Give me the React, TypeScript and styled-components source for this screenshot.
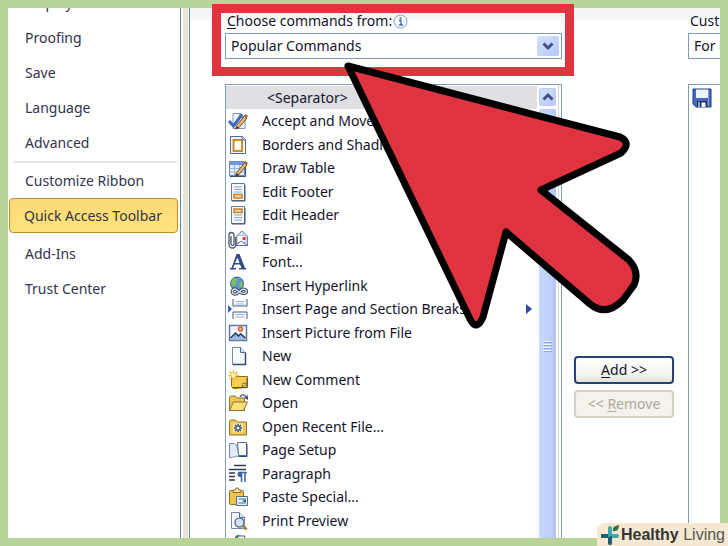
import React from 'react';
import styled, { createGlobalStyle } from 'styled-components';

const GlobalStyle = createGlobalStyle`
  *, *::before, *::after { box-sizing: border-box; }
  body {
    margin: 0;
    background: #b9d398;
    color: #14142c;
    font: 14px/20px "Noto Sans", "Open Sans", sans-serif;
  }
  button, select { font: inherit; color: inherit; }
  ul { list-style: none; margin: 0; padding: 0; }
`;

const Page = styled.div`
  position: relative;
  display: grid;
  grid-template-columns: 182px minmax(0, 1fr);
  height: 100vh;
  padding: 8px;
  overflow: hidden;
`;

const Sidebar = styled.nav`
  overflow: hidden;
  padding-right: 9px;
  background: linear-gradient(
    to left,
    #5c8cac 1px, #fff 1px, #fff 2px, #ebe6d4 2px, #ebe6d4 7px,
    #fff 7px, #fff 9px, #5c8cac 9px, #5c8cac 10px, #fff 10px
  );
`;

const NavList = styled.ul`
  margin-top: -23px;
  padding-left: 1px;
`;

const NavItem = styled.li<{ $after?: 'line' | 'gap' }>`
  padding-right: 3px;
  ${(p) => p.$after === 'line' && `
    &::after { content: ''; display: block; height: 2px; margin: 1px 1px 0 4px; background: #e4e4e6; }
  `}
  ${(p) => p.$after === 'gap' && 'margin-bottom: 3px;'}
`;

const NavButton = styled.button<{ $active?: boolean }>`
  display: block;
  width: 100%;
  height: 35px;
  padding: 0 0 0 ${(p) => (p.$active ? 14 : 15)}px;
  text-align: left;
  white-space: nowrap;
  color: #33334d;
  background: ${(p) => (p.$active ? 'linear-gradient(#fbd878, #fddf76 50%, #fee57c)' : 'transparent')};
  border: ${(p) => (p.$active ? '1px solid #bd8a2c' : '1px solid transparent')};
  border-radius: 4px;
`;

const Main = styled.main`
  display: grid;
  grid-template-columns: minmax(0, 337fr) 126px minmax(0, 32fr);
  min-height: 0;
  padding-left: 35px;
  background: linear-gradient(#f4f4f5, #f6f6f7 11px, #fff 13px);
`;

const Column = styled.section`
  display: flex;
  flex-direction: column;
  min-width: 0;
  min-height: 0;
`;

const ClippedColumn = styled(Column)`
  overflow: hidden;
  & > * { min-width: 337px; }
`;

const Field = styled.div`
  position: relative;
  height: 76px;
  padding-top: 3px;
`;

const Label = styled.label`
  display: flex;
  align-items: center;
  gap: 1px;
  height: 20px;
  padding-left: 2px;
  white-space: nowrap;
`;

const Key = styled.span`
  text-decoration: underline;
  text-underline-offset: 2px;
`;

const SelectBox = styled.div`
  display: grid;
  align-items: center;
  margin-top: 2px;
  & > * { grid-area: 1 / 1; }
`;

const Select = styled.select`
  appearance: none;
  width: 100%;
  height: 26px;
  padding: 0 0 0 5px;
  background: #fff;
  border: 1px solid #7f9db9;
  border-radius: 0;
`;

const SelectArrow = styled.span`
  display: grid;
  place-items: center;
  justify-self: end;
  width: 22px;
  height: 20px;
  margin-right: 3px;
  background: linear-gradient(135deg, #d5e1fe, #b4c8f8);
  border-radius: 2px;
  pointer-events: none;
`;

const Highlight = styled.div`
  position: absolute;
  inset: -4px -12px 8px -13px;
  border: 9px solid #e0343f;
  pointer-events: none;
`;

const ListPanel = styled.div`
  display: grid;
  grid-template-columns: minmax(0, 1fr) 24px;
  flex: 1;
  min-height: 0;
  overflow: hidden;
  background: #fff;
  border: 1px solid #7f9db9;
  border-bottom: 0;
`;

const Commands = styled.ul`
  padding-top: 1px;
  min-height: 0;
`;

const Command = styled.li`
  display: grid;
  grid-template-columns: 20px minmax(0, 1fr) auto;
  align-items: center;
  column-gap: 14px;
  height: 23px;
  padding: 0 5px 0 2px;
  white-space: nowrap;
  &:nth-child(even) { height: 24px; }
`;

const Separator = styled(Command)`
  grid-template-columns: minmax(0, 1fr);
  padding-left: 41px;
  background: #e0dfe3;
`;

const ScrollBar = styled.div`
  display: flex;
  flex-direction: column;
  gap: 3px;
  min-height: 0;
  padding: 3px 2px 0;
  border-right: 1px solid #c9d9e8;
  margin-right: 2px;
  background: #fdfdfb;
`;

const ScrollButton = styled.button`
  display: grid;
  place-items: center;
  flex: none;
  height: 18px;
  padding: 0;
  background: linear-gradient(135deg, #d5e1fe, #b4c8f8);
  border: 1px solid #b9cbf3;
  border-radius: 2px;
`;

const Thumb = styled.div`
  display: grid;
  flex: none;
  place-items: center;
  height: 474px;
  background: linear-gradient(to right, #c9d8fd, #bccffb 70%, #b3c5f3);
  border-radius: 2px;
`;

const Actions = styled.div`
  display: flex;
  flex-direction: column;
  align-items: center;
  gap: 6px;
  padding: 348px 2px 0 0;
`;

const ActionButton = styled.button`
  width: 100px;
  height: 28px;
  padding: 0;
  background: linear-gradient(#fff, #f4f3ee 70%, #e4e1d6);
  border: 2px solid #24427c;
  border-radius: 4px;
  white-space: nowrap;
  &:disabled {
    color: #aaa99c;
    background: #f4f2e9;
    border-color: #d6d1c2;
  }
`;

const SaveItem = styled.li`
  padding: 3px;
  line-height: 0;
`;

const CursorArt = styled.svg`
  position: absolute;
  left: 340px;
  top: 56px;
  pointer-events: none;
`;

const Brand = styled.footer`
  position: absolute;
  right: 0;
  bottom: 0;
  display: flex;
  align-items: center;
  gap: 2px;
  height: 23px;
  padding: 0 3px 0 4px;
  background: #f6e8d0;
  border-radius: 8px 0 0 0;
  color: #555;
  font: 16px/22px "Liberation Sans", Arial, sans-serif;
  white-space: nowrap;
  strong { color: #343434; }
`;

const Chevron = ({ up }: { up?: boolean }) => (
  <svg width="12" height="10" viewBox="0 0 12 10" fill="none" stroke="#40537c" strokeWidth="3" aria-hidden="true">
    <path d={up ? 'M1.5 7.5 6 3l4.5 4.5' : 'M1.5 2.5 6 7l4.5-4.5'} />
  </svg>
);

const InfoIcon = () => (
  <svg width="15" height="15" viewBox="0 0 15 15" aria-hidden="true">
    <circle cx="7.5" cy="7.5" r="6.5" fill="#f8faff" stroke="#8ba3cd" />
    <path d="M6 6.5h2V11M6 11h4" fill="none" stroke="#4169b5" strokeWidth="1.3" />
    <rect x="6.7" y="3.4" width="1.8" height="1.8" fill="#4169b5" />
  </svg>
);

const SaveIcon = () => (
  <svg width="20" height="20" viewBox="0 0 20 20" aria-hidden="true">
    <path d="M1 1h18v18H4l-3-3z" fill="#4668bd" stroke="#203c86" />
    <path d="M4 1.5h12V10H4z" fill="#edf3ff" />
    <path d="M16.5 2v16" stroke="#7f9ce0" />
    <path d="M5 13h10v6H5z" fill="#26314f" />
    <path d="M9.5 14.5h4V19h-4z" fill="#fff" />
    <path d="M6 14h2v5H6z" fill="#8fa8d8" />
  </svg>
);

const Folder = ({ open }: { open?: boolean }) => (
  <>
    <path d="M1.5 17.5v-13l1-1.5h5l2 2h7v12.5z" fill="#efc64e" stroke="#8d7530" />
    {open && <path d="M1.5 17.5 5.5 9h14l-4 8.5z" fill="#fbdf7d" stroke="#8d7530" />}
  </>
);

const Pencil = () => (
  <>
    <path d="m8.5 14.5 8-9.5 2.5 2-8 9.5-3.5 1.5z" fill="#e9b568" stroke="#65503a" />
    <path d="m16 5 1.5-2 2.5 2-1.5 2z" fill="#b85c3b" />
    <path d="m8 18 .8-2.8L11 17z" fill="#20242e" />
  </>
);

const drawings: Record<string, React.ReactNode> = {
  accept: (
    <>
      <path d="M5 2.5h8l4 4v11H5z" fill="#eef4fd" stroke="#8296b4" />
      <path d="m1 10 4.5 5L14 3.5" fill="none" stroke="#3c68bd" strokeWidth="3" />
      <path d="M12 2.5v4h4" fill="none" stroke="#5a6e8c" />
      <Pencil />
    </>
  ),
  borders: (
    <>
      <path d="M2.5 1.5h12l3 3v14h-15z" fill="#f6f8fc" stroke="#52698f" />
      <path d="M5.5 5H14v11H5.5z" fill="#fffdf5" stroke="#cd8b30" strokeWidth="2" />
      <path d="M14 1.5V5h3.5" fill="#dce6f5" stroke="#52698f" />
    </>
  ),
  table: (
    <>
      <path d="M1.5 3.5h15v14h-15z" fill="#e7effc" stroke="#6684b9" />
      <path d="M1.5 3.5h15V7h-15z" fill="#7197dd" />
      <path d="M1.5 10.5h15m-15 3.5h15M6.5 7v10.5m5-10.5v10.5" stroke="#9bb3dc" />
      <path d="M2 18.5h15.5V8" fill="none" stroke="#334d7d" />
      <Pencil />
    </>
  ),
  footer: (
    <>
      <path d="M3.5 1.5h13v17h-13z" fill="#f7faff" stroke="#65799c" />
      <path d="M6 5h8M6 7.5h8M6 10h8" stroke="#8ca3c7" />
      <path d="M6 12.5h8V16H6z" fill="#fbd89a" stroke="#c5842c" strokeWidth="1.5" />
      <path d="M4 19h13V3" fill="none" stroke="#415675" />
    </>
  ),
  header: (
    <>
      <path d="M3.5 1.5h13v17h-13z" fill="#f7faff" stroke="#65799c" />
      <path d="M6 4h8v3.5H6z" fill="#fbd89a" stroke="#c5842c" strokeWidth="1.5" />
      <path d="M6 10h8M6 12.5h8M6 15h8" stroke="#8ca3c7" />
      <path d="M4 19h13V3" fill="none" stroke="#415675" />
    </>
  ),
  mail: (
    <>
      <path d="M7.5 8 14 2l5.5 5v9.5h-12z" fill="#dce6f5" stroke="#7085a8" />
      <path d="M9 6.5h9v7H9z" fill="#fff" stroke="#a9b8d0" />
      <path d="M7.5 16.5 13 12l6.5 4.500z" fill="#f4f7fc" stroke="#5c7196" />
      <path d="M14.5 8h3v3h-3z" fill="#d54538" />
      <path d="M3 7v8a1.5 1.5 0 0 0 3 0V6a2.5 2.5 0 0 0-5 0v9.5a3.500 3.500 0 0 0 7 0V8" fill="none" stroke="#4b556b" strokeWidth="1.3" />
    </>
  ),
  font: (
    <path d="M8.5 2h3L17 16h1v1.5h-7V16h2.5L12 12.5H6.5L5.3 16H8v1.5H2V16h1.5zM9.500 5.500 7 11h4.500z" fill="#304b85" fillRule="evenodd" />
  ),
  link: (
    <>
      <circle cx="9" cy="7.5" r="6.5" fill="#5b91d7" stroke="#315c9d" />
      <path d="M4 4c3-3 6-2 6 0L8 6l1 2-3 3-2-2-1.5-2zM11 7l3-2 1 3-2 4-2-2zM10 1.5l3 1-1 1z" fill="#7bbd64" />
      <path d="M4.5 14.5c1-2 3-2 5 0l3 2c3 1.500 6 1 6-1s-3-3-5-1.500l-3 2.500c-3 2.500-7 2-6-2z" fill="none" stroke="#3f4f68" strokeWidth="3.4" />
      <path d="M4.5 14.5c1-2 3-2 5 0l3 2c3 1.500 6 1 6-1s-3-3-5-1.500l-3 2.500c-3 2.500-7 2-6-2z" fill="none" stroke="#dce4ee" strokeWidth="1.3" />
    </>
  ),
  break: (
    <>
      <path d="M5 0v7h14V0M5 20v-7h14v7" fill="#f7faff" stroke="#42587c" />
      <path d="M7.5 2.5h9M7.5 5h9M7.5 15.500h9M7.5 18h9" stroke="#9dafca" />
      <path d="m0 6 4 4-4 4z" fill="#315dba" />
    </>
  ),
  picture: (
    <>
      <path d="M1.5 2.5h17v15h-17z" fill="#f1f6ff" stroke="#6278a0" strokeWidth="1.5" />
      <path d="m2.5 15 5-5 3 2.500 2.500-3 4.500 5V17h-15z" fill="#9db8e2" />
      <path d="m2.500 15 5-5 3 3 2-2 5 4" fill="none" stroke="#233d6b" strokeWidth="1.5" />
      <circle cx="12.5" cy="6" r="2" fill="#f7d176" stroke="#d65d36" strokeWidth="1.5" />
    </>
  ),
  blank: (
    <>
      <path d="M4.5 1.5h8l5 5v12h-13z" fill="#f7faff" stroke="#7187ad" />
      <path d="M12.5 1.5v5h5" fill="#d6e3f7" stroke="#536b95" />
      <path d="M5 18.5h12.5V7" fill="none" stroke="#354c79" strokeWidth="1.5" />
    </>
  ),
  comment: (
    <>
      <path d="M3.5 6.5h16v11l-14 1-2-2z" fill="#f5ce51" stroke="#8b6f27" />
      <path d="M4 17.5h15V8" fill="none" stroke="#604d25" />
      <path d="m14 17 1-4 4 1z" fill="#fff0a6" stroke="#8b6f27" />
      <path d="M5.5 0v11M0 5.5h11M1.5 1.5l8 8m0-8-8 8" stroke="#edbd3c" strokeWidth="1.5" />
      <circle cx="5.5" cy="5.5" r="2" fill="#fff7cd" />
    </>
  ),
  open: (
    <>
      <Folder open />
      <path d="M12 4c2-3 4-3 6 0" fill="none" stroke="#58719f" strokeWidth="1.5" />
      <path d="M20 2v5l-4-2z" fill="#405989" />
    </>
  ),
  recent: (
    <>
      <path d="M1.5 18V4.500L2.500 3h5l2 2h9v13z" fill="#efc64e" stroke="#8d7530" />
      <path d="M5 6.500h10v9H5z" fill="#fbe9a8" />
      <path d="M10 7v8M6 11h8M7 8l6 6m0-6-6 6" stroke="#29477d" strokeWidth="1.5" />
      <circle cx="10" cy="11" r="1.5" fill="#fff" />
    </>
  ),
  setup: (
    <>
      <path d="M1.5 17.5v-14h5c2 0 3 5 4.500 10v3.500c-3-2-6 1-9.500.5z" fill="#e3eaf7" stroke="#7385a4" />
      <path d="M9.5 2.5h9v13h-8z" fill="#f8faff" stroke="#526b97" />
      <path d="M11 16.5h8V4" fill="none" stroke="#304774" />
    </>
  ),
  paragraph: (
    <>
      <path d="M6 1.5h12M1 5.5h17M1 9h6M1 12.5h6M1 16h6" stroke="#34394b" strokeWidth="1.5" />
      <path d="M17 8v10M13.5 8v10M10 8.5h9" stroke="#4062a0" strokeWidth="1.5" />
      <path d="M13.5 8H12a2.5 2.5 0 0 0 0 5h1.5z" fill="#4062a0" />
    </>
  ),
  paste: (
    <>
      <rect x="1.5" y="3.5" width="14" height="14" rx="1" fill="#efc44d" stroke="#8d702c" />
      <path d="M5 5.5V3h2l1-2h2l1 2h2v2.5z" fill="#f5e3a0" stroke="#846d3b" />
      <path d="M8.5 9.5h11v9h-11z" fill="#e8f2fd" stroke="#506c86" />
      <path d="M10.5 12h7M10.5 16h7" stroke="#6ba2a4" strokeWidth="1.5" />
      <path d="m14 14 4-2v4z" fill="#466594" />
    </>
  ),
  preview: (
    <>
      <path d="M3.5 1.5h8l5 5v11h-13z" fill="#f6f9ff" stroke="#7489ae" />
      <path d="M11.5 1.5v5h5" fill="#dce6f5" stroke="#536b95" />
      <path d="m15 15 3.5 3.5" stroke="#b28031" strokeWidth="3" />
      <circle cx="11.5" cy="11.5" r="4.5" fill="#d0e2f7" stroke="#66758c" strokeWidth="1.5" />
    </>
  ),
  print: (
    <>
      <path d="M6 8 8 2h9l-2 6z" fill="#fff" stroke="#55657d" />
      <path d="M2 8h16v7H2z" fill="#dde1e5" stroke="#4d5662" />
      <path d="m2 5 3 3 6-7" fill="none" stroke="#4e8750" strokeWidth="2" />
    </>
  ),
};

const commands: { icon: string; name: string; submenu?: boolean }[] = [
  { icon: 'accept', name: 'Accept and Move to Next' },
  { icon: 'borders', name: 'Borders and Shading...' },
  { icon: 'table', name: 'Draw Table' },
  { icon: 'footer', name: 'Edit Footer' },
  { icon: 'header', name: 'Edit Header' },
  { icon: 'mail', name: 'E-mail' },
  { icon: 'font', name: 'Font...' },
  { icon: 'link', name: 'Insert Hyperlink' },
  { icon: 'break', name: 'Insert Page and Section Breaks', submenu: true },
  { icon: 'picture', name: 'Insert Picture from File' },
  { icon: 'blank', name: 'New' },
  { icon: 'comment', name: 'New Comment' },
  { icon: 'open', name: 'Open' },
  { icon: 'recent', name: 'Open Recent File...' },
  { icon: 'setup', name: 'Page Setup' },
  { icon: 'paragraph', name: 'Paragraph' },
  { icon: 'paste', name: 'Paste Special...' },
  { icon: 'preview', name: 'Print Preview' },
  { icon: 'print', name: 'Quick Print' },
];

const sections: { name: string; active?: boolean; after?: 'line' | 'gap' }[] = [
  { name: 'Display' },
  { name: 'Proofing' },
  { name: 'Save' },
  { name: 'Language' },
  { name: 'Advanced', after: 'line' },
  { name: 'Customize Ribbon' },
  { name: 'Quick Access Toolbar', active: true, after: 'gap' },
  { name: 'Add-Ins' },
  { name: 'Trust Center' },
];

export default function App() {
  return (
    <>
      <GlobalStyle />
      <Page>
        <Sidebar aria-label="Options">
          <NavList>
            {sections.map((s) => (
              <NavItem key={s.name} $after={s.after}>
                <NavButton type="button" $active={s.active} aria-current={s.active ? 'page' : undefined}>
                  {s.name}
                </NavButton>
              </NavItem>
            ))}
          </NavList>
        </Sidebar>
        <Main>
          <Column>
            <Field>
              <Label htmlFor="source">
                <span><Key>C</Key>hoose commands from:</span>
                <InfoIcon />
              </Label>
              <SelectBox>
                <Select id="source">
                  <option>Popular Commands</option>
                </Select>
                <SelectArrow><Chevron /></SelectArrow>
              </SelectBox>
              <Highlight />
            </Field>
            <ListPanel>
              <Commands role="listbox" aria-label="Commands">
                <Separator role="option" aria-selected="true">&lt;Separator&gt;</Separator>
                {commands.map((c) => (
                  <Command key={c.name} role="option" aria-selected="false">
                    <svg width="20" height="20" viewBox="0 0 20 20" aria-hidden="true">{drawings[c.icon]}</svg>
                    <span>{c.name}</span>
                    {c.submenu && (
                      <svg width="6" height="10" viewBox="0 0 6 10" aria-hidden="true"><path d="m0 0 6 5-6 5z" fill="#324aa0" /></svg>
                    )}
                  </Command>
                ))}
              </Commands>
              <ScrollBar>
                <ScrollButton type="button" aria-label="Scroll up"><Chevron up /></ScrollButton>
                <Thumb>
                  <svg width="9" height="12" viewBox="0 0 9 12" aria-hidden="true">
                    <path d="M0 1.5h8m-8 3h8m-8 3h8m-8 3h8" stroke="#f2f6ff" />
                    <path d="M1 2.5h8m-8 3h8m-8 3h8m-8 3h8" stroke="#8ca7e4" />
                  </svg>
                </Thumb>
              </ScrollBar>
            </ListPanel>
          </Column>
          <Actions>
            <ActionButton type="button"><Key>A</Key>dd &gt;&gt;</ActionButton>
            <ActionButton type="button" disabled>&lt;&lt; <Key>R</Key>emove</ActionButton>
          </Actions>
          <ClippedColumn>
            <Field>
              <Label htmlFor="target">Customize Quick Access Toolbar:</Label>
              <SelectBox>
                <Select id="target">
                  <option>For all documents (default)</option>
                </Select>
              </SelectBox>
            </Field>
            <ListPanel>
              <ul aria-label="Toolbar commands">
                <SaveItem><SaveIcon /></SaveItem>
              </ul>
            </ListPanel>
          </ClippedColumn>
        </Main>
        <CursorArt width="304" height="280" viewBox="340 56 304 280" aria-hidden="true">
          <path
            d="M348 66 620 137Q632 143 621 153L541 190 629 260Q640 272 634 285L623 300Q606 317 590 304L506 232 483 317Q477 332 470 319Z"
            fill="#df3440" stroke="#000" strokeWidth="7" strokeLinejoin="round"
          />
        </CursorArt>
        <Brand>
          <svg width="18" height="21" viewBox="0 0 18 21" aria-hidden="true">
            <path d="M9 4v15M1.5 12H16" stroke="#39a9ab" strokeWidth="4" strokeLinecap="round" />
            <path d="M9 12v7M9 12H1.5" stroke="#235e70" strokeWidth="4" strokeLinecap="round" />
            <path d="M9 12 7 14V4h4v6h5l1 3z" fill="#39a9ab" />
            <path d="M12 7c-1-4 2-5 6-6 0 4-2 7-6 6z" fill="#36713f" />
          </svg>
          <span><strong>Healthy</strong> Living</span>
        </Brand>
      </Page>
    </>
  );
}
